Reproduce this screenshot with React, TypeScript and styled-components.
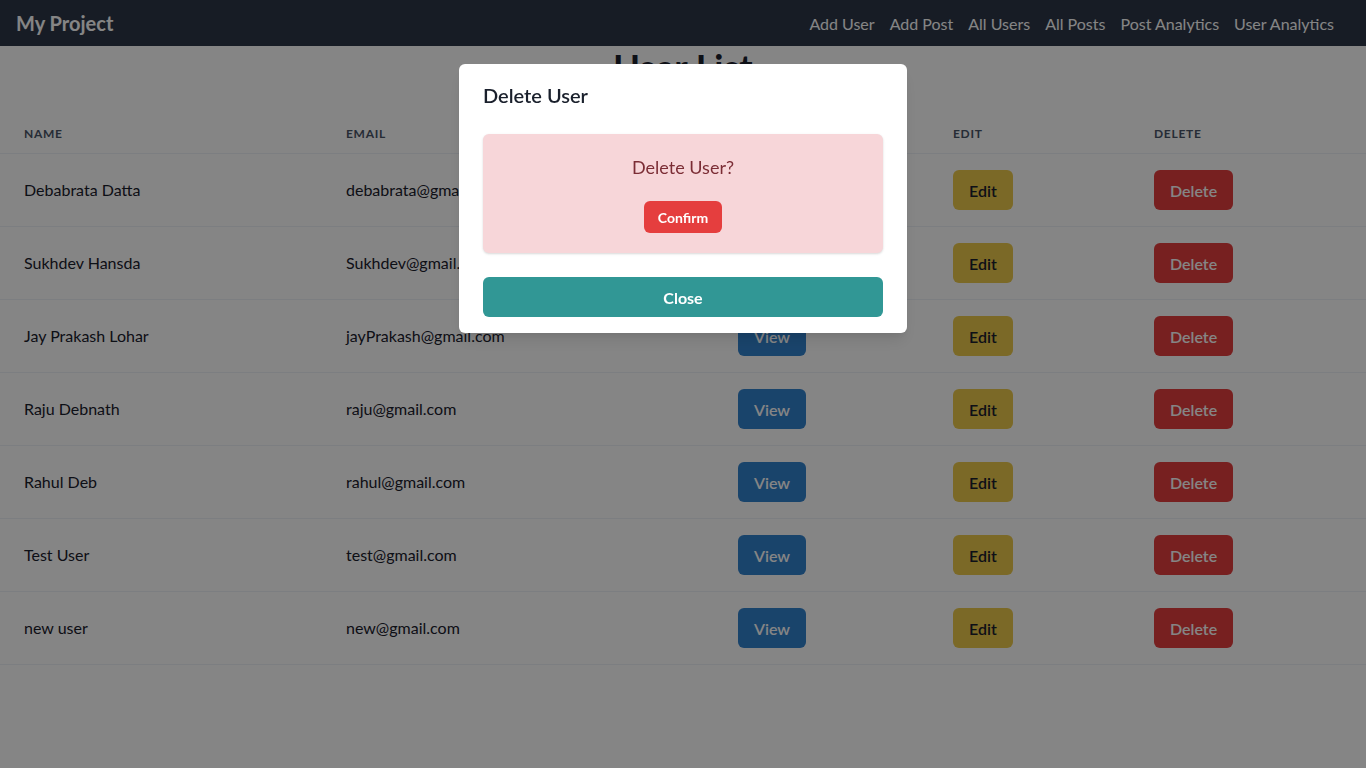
import React from "react";
import styled, { createGlobalStyle } from "styled-components";

const Global = createGlobalStyle`
  html, body { margin: 0; padding: 0; }
  body {
    font-family: "Segoe UI", Lato, "Open Sans", sans-serif;
    color: #1a202c;
    background: #ffffff;
  }
  * { box-sizing: border-box; }
`;

const Nav = styled.nav`
  height: 46px;
  background: #2d3748;
  display: flex;
  align-items: center;
  justify-content: space-between;
  padding: 0 32px 0 16px;
`;

const Brand = styled.div`
  color: #ffffff;
  font-size: 20px;
  font-weight: 700;
`;

const Links = styled.div`
  display: flex;
  gap: 15px;
`;

const NavLink = styled.a`
  color: #ffffff;
  font-size: 16px;
  text-decoration: none;
`;

const Title = styled.h1`
  margin: 0 0 24px;
  text-align: center;
  font-size: 36px;
  line-height: 43px;
  font-weight: 700;
  color: #1a202c;
`;

const Table = styled.table`
  width: 100%;
  border-collapse: collapse;
  table-layout: fixed;
`;

const Th = styled.th<{ $w: number }>`
  width: ${(p) => p.$w}px;
  text-align: left;
  padding: 13px 24px 11px;
  font-size: 12px;
  line-height: 16px;
  font-weight: 700;
  letter-spacing: 0.06em;
  text-transform: uppercase;
  color: #4a5568;
  border-bottom: 1px solid #edf2f7;
`;

const Td = styled.td`
  padding: 16px 24px;
  height: 73px;
  font-size: 16px;
  line-height: 24px;
  border-bottom: 1px solid #edf2f7;
  white-space: nowrap;
  vertical-align: middle;
`;

const Btn = styled.button<{ $bg: string; $fg: string }>`
  display: block;
  height: 40px;
  padding: 0 16px;
  border: none;
  border-radius: 6px;
  background: ${(p) => p.$bg};
  color: ${(p) => p.$fg};
  font-family: inherit;
  font-size: 16px;
  font-weight: 600;
`;

const Overlay = styled.div`
  position: fixed;
  inset: 0;
  background: rgba(0, 0, 0, 0.48);
  display: flex;
  justify-content: center;
  align-items: flex-start;
  padding-top: 64px;
`;

const Modal = styled.section`
  width: 448px;
  background: #ffffff;
  border-radius: 6px;
  box-shadow: 0 10px 15px -3px rgba(0, 0, 0, 0.1), 0 4px 6px -2px rgba(0, 0, 0, 0.05);
`;

const ModalHeader = styled.header`
  padding: 16px 24px;
  font-size: 20px;
  line-height: 30px;
  font-weight: 600;
  color: #1a202c;
`;

const ModalBody = styled.div`
  padding: 8px 24px;
`;

const Alert = styled.div`
  background: #f7d6d9;
  border-radius: 6px;
  box-shadow: 0 1px 3px rgba(0, 0, 0, 0.1), 0 1px 2px rgba(0, 0, 0, 0.06);
  display: flex;
  flex-direction: column;
  align-items: center;
  padding: 20px 16px 20px;
  gap: 20px;
`;

const AlertText = styled.div`
  font-size: 18px;
  line-height: 27px;
  color: #7b2d35;
`;

const SmallBtn = styled.button`
  height: 32px;
  padding: 0 14px;
  border: none;
  border-radius: 6px;
  background: #e53e3e;
  color: #ffffff;
  font-family: inherit;
  font-size: 14px;
  font-weight: 700;
`;

const ModalFooter = styled.footer`
  padding: 16px 24px;
`;

const CloseBtn = styled.button`
  display: block;
  width: 100%;
  height: 40px;
  border: none;
  border-radius: 6px;
  background: #319795;
  color: #ffffff;
  font-family: inherit;
  font-size: 16px;
  font-weight: 700;
`;

const users = [
  ["Debabrata Datta", "debabrata@gmail.com"],
  ["Sukhdev Hansda", "Sukhdev@gmail.com"],
  ["Jay Prakash Lohar", "jayPrakash@gmail.com"],
  ["Raju Debnath", "raju@gmail.com"],
  ["Rahul Deb", "rahul@gmail.com"],
  ["Test User", "test@gmail.com"],
  ["new user", "new@gmail.com"],
];

export default function App() {
  return (
    <>
      <Global />
      <Nav>
        <Brand>My Project</Brand>
        <Links>
          {["Add User", "Add Post", "All Users", "All Posts", "Post Analytics", "User Analytics"].map((l) => (
            <NavLink key={l} href="#">{l}</NavLink>
          ))}
        </Links>
      </Nav>
      <Title>User List</Title>
      <Table>
        <thead>
          <tr>
            <Th $w={322}>Name</Th>
            <Th $w={392}>Email</Th>
            <Th $w={215}>View</Th>
            <Th $w={201}>Edit</Th>
            <Th $w={236}>Delete</Th>
          </tr>
        </thead>
        <tbody>
          {users.map(([n, e]) => (
            <tr key={e}>
              <Td>{n}</Td>
              <Td>{e}</Td>
              <Td><Btn $bg="#3182ce" $fg="#ffffff">View</Btn></Td>
              <Td><Btn $bg="#ecc94b" $fg="#1a202c">Edit</Btn></Td>
              <Td><Btn $bg="#e53e3e" $fg="#ffffff">Delete</Btn></Td>
            </tr>
          ))}
        </tbody>
      </Table>
      <Overlay>
        <Modal>
          <ModalHeader>Delete User</ModalHeader>
          <ModalBody>
            <Alert>
              <AlertText>Delete User?</AlertText>
              <SmallBtn>Confirm</SmallBtn>
            </Alert>
          </ModalBody>
          <ModalFooter>
            <CloseBtn>Close</CloseBtn>
          </ModalFooter>
        </Modal>
      </Overlay>
    </>
  );
}
